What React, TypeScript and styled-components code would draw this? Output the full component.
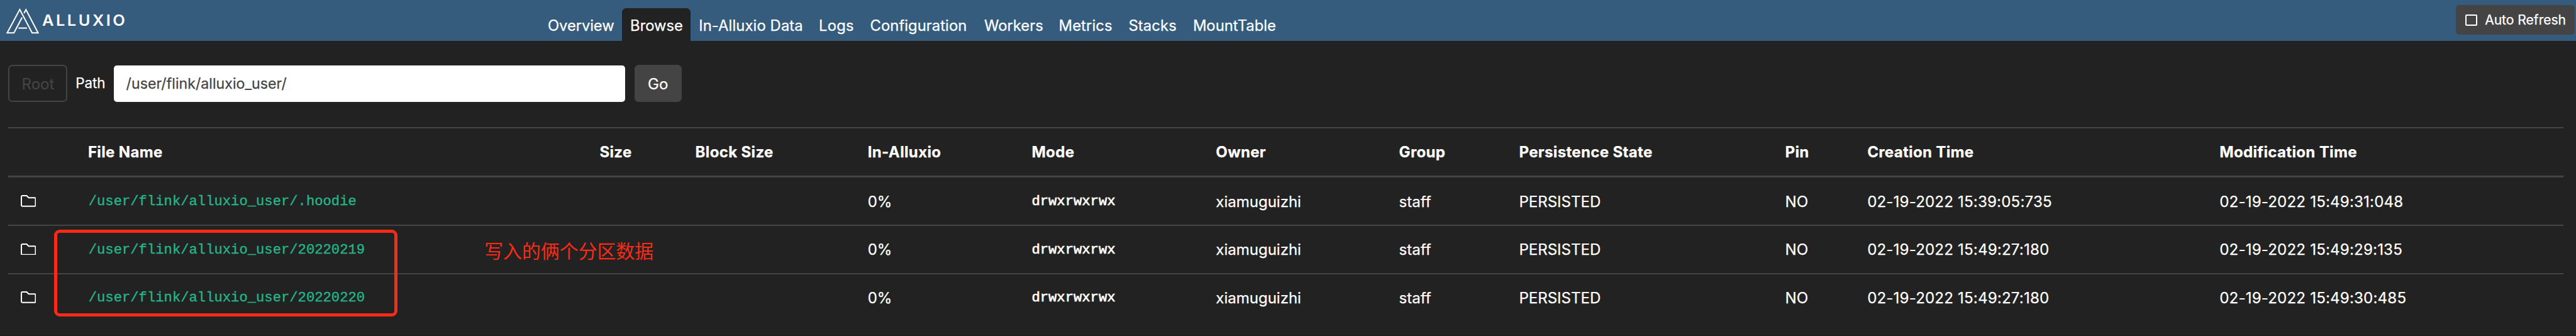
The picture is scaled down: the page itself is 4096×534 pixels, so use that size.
import React from "react";
import styled, { createGlobalStyle } from "styled-components";

/* Design units are device pixels of a 5020px wide canvas. */
const SCALE = 4096 / 5020;
const u = (n: number) => `${(n * SCALE).toFixed(3)}px`;

const color = {
  bar: "#365c7d",
  page: "#222222",
  line: "#444444",
  link: "#26b489",
  mark: "#fb2a17",
};

const GlobalStyle = createGlobalStyle`
  * { box-sizing: border-box; }
  body {
    margin: 0;
    background: ${color.page};
    color: #fff;
    font-family: Inter, "Noto Sans CJK SC", sans-serif;
    font-size: 24px;
    line-height: 1.25;
    -webkit-text-stroke-width: 0.25px;
    overflow: hidden;
  }
`;

const Page = styled.div`
  position: relative;
  width: 4096px;
  height: 534px;
  display: flex;
  flex-direction: column;
  background: ${color.page};
  border-bottom: 1px solid #1b1b1b;
`;

const Header = styled.header`
  display: flex;
  align-items: flex-start;
  flex: none;
  height: ${u(80)};
  background: ${color.bar};
`;

const Brand = styled.div`
  width: ${u(1051.5)};
  flex: none;
`;

const Logo = styled.svg`
  display: block;
  width: ${u(260)};
  height: ${u(80)};
`;

const Nav = styled.nav`
  display: flex;
  flex: 1;
  padding-top: ${u(16)};
`;

const Tab = styled.a<{ $width: number; $active?: boolean; $spacing?: number }>`
  display: flex;
  align-items: center;
  width: ${(p) => u(p.$width)};
  height: ${u(64)};
  padding: 3px 0 0 ${u(16)};
  font-size: 23.8px;
  letter-spacing: ${(p) => p.$spacing ?? 0}px;
  white-space: nowrap;
  border-radius: ${u(8)} ${u(8)} 0 0;
  background: ${(p) => (p.$active ? color.page : "transparent")};
`;

const RefreshButton = styled.button`
  display: flex;
  align-items: center;
  width: ${u(232)};
  height: ${u(58)};
  margin: ${u(10)} ${u(2)} 0 0;
  padding: 0 0 0 ${u(18)};
  border: 0;
  border-radius: ${u(6)};
  background: ${color.line};
  color: #fff;
  font: 21.05px Inter, sans-serif;
  white-space: nowrap;
`;

const CheckBox = styled.span`
  width: ${u(24)};
  height: ${u(22.5)};
  margin-right: ${u(14.5)};
  border: 2px solid #fff;
  border-radius: 2px;
`;

const Toolbar = styled.form`
  display: flex;
  align-items: center;
  flex: none;
  height: ${u(72)};
  margin: ${u(46)} 0 ${u(50)} ${u(16.5)};
`;

const Button = styled.button<{ $width: number; $outline?: boolean }>`
  width: ${(p) => u(p.$width)};
  height: ${u(72)};
  padding: 2px 0 0;
  border: 2px solid ${color.line};
  border-radius: ${u(8)};
  background: ${(p) => (p.$outline ? "transparent" : color.line)};
  color: ${(p) => (p.$outline ? color.line : "#fff")};
  font: 24px Inter, sans-serif;
`;

const Label = styled.label`
  width: ${u(75)};
  margin-left: ${u(15.6)};
  font-size: 22.4px;
`;

const PathInput = styled.input`
  width: ${u(995.6)};
  height: ${u(70)};
  margin: ${u(2)} ${u(18.3)} 0 0;
  padding: 0 0 0 ${u(23.6)};
  border: 0;
  border-radius: ${u(6)};
  background: #fff;
  color: #444;
  font: 23.2px Inter, sans-serif;
`;

const Table = styled.div`
  display: flex;
  flex-direction: column;
  width: ${u(4980)};
  margin-left: ${u(16)};
`;

const Rule = styled.div<{ $size: number }>`
  height: ${(p) => u(p.$size)};
  background: ${color.line};
`;

const COLUMNS = [155.5, 997, 186.5, 336, 319.5, 359, 357, 234, 518.5, 160, 686.5, 670];

const Row = styled.div<{ $head?: boolean }>`
  display: grid;
  grid-template-columns: ${COLUMNS.map(u).join(" ")};
  align-items: center;
  height: ${u(92)};
  padding-top: 2px;
  white-space: nowrap;
  font-weight: ${(p) => (p.$head ? 700 : 400)};
  letter-spacing: ${(p) => (p.$head ? 0.35 : 0)}px;
`;

const Cell = styled.span``;

const TimeCell = styled.span`
  letter-spacing: 0.22px;
`;

const MonoCell = styled.span<{ $link?: boolean }>`
  padding-left: ${(p) => (p.$link ? u(1) : 0)};
  font-family: "Liberation Mono", monospace;
  font-size: 22.2px;
  letter-spacing: 0;
  -webkit-text-stroke-width: ${(p) => (p.$link ? 0.4 : 0.7)}px;
  color: ${(p) => (p.$link ? color.link : "#fff")};
`;

const Folder = styled.svg`
  display: block;
  width: ${u(30)};
  height: ${u(23)};
  margin: 0 0 3px ${u(24)};
`;

const HighlightBox = styled.div`
  position: absolute;
  left: ${u(105)};
  top: ${u(447.7)};
  width: ${u(670)};
  height: ${u(168.5)};
  border: 5px solid ${color.mark};
  border-radius: ${u(11)};
`;

const Note = styled.div`
  position: absolute;
  left: ${u(944)};
  top: ${u(462)};
  font-family: "Noto Sans CJK SC", sans-serif;
  font-size: 29.9px;
  line-height: 40px;
  -webkit-text-stroke-width: 0;
  color: ${color.mark};
  white-space: nowrap;
`;

const tabs = [
  { label: "Overview", width: 160.7, spacing: -0.1 },
  { label: "Browse", width: 133.7, active: true },
  { label: "In-Alluxio Data", width: 234, spacing: 0.1 },
  { label: "Logs", width: 99.8, spacing: 0.2 },
  { label: "Configuration", width: 222.4, spacing: 0.05 },
  { label: "Workers", width: 145.3 },
  { label: "Metrics", width: 136, spacing: 0.1 },
  { label: "Stacks", width: 125.5, spacing: 0.1 },
  { label: "MountTable", width: 192 },
];

const headings = [
  "", "File Name", "Size", "Block Size", "In-Alluxio", "Mode", "Owner", "Group",
  "Persistence State", "Pin", "Creation Time", "Modification Time",
];

const files = [
  { path: "/user/flink/alluxio_user/.hoodie", created: "02-19-2022 15:39:05:735", modified: "02-19-2022 15:49:31:048" },
  { path: "/user/flink/alluxio_user/20220219", created: "02-19-2022 15:49:27:180", modified: "02-19-2022 15:49:29:135" },
  { path: "/user/flink/alluxio_user/20220220", created: "02-19-2022 15:49:27:180", modified: "02-19-2022 15:49:30:485" },
];

const BrandLogo = () => (
  <Logo viewBox="0 0 260 80" fill="none" stroke="#fff" strokeWidth="2.5">
    <path d="M43 34 L27.2 64 H14 L38.5 18.5 L62.6 64 H74.2 L50.6 18.8 L46.8 25.6" />
    <path d="M36 54.7 H52.5" />
    <text
      x="82"
      y="49.8"
      fill="#fff"
      stroke="none"
      fontFamily="Inter, sans-serif"
      fontWeight="600"
      fontSize="29"
      letterSpacing="4"
      textLength="166"
      lengthAdjust="spacingAndGlyphs"
    >
      ALLUXIO
    </text>
  </Logo>
);

const FolderIcon = () => (
  <Folder viewBox="0 0 30 23" fill="none" stroke="#fff" strokeWidth="2.4">
    <path d="M1.2 3.4 Q1.2 1.2 3.4 1.2 H11.6 L15.4 5.2 H27 Q28.8 5.2 28.8 7 V20 Q28.8 21.8 27 21.8 H3 Q1.2 21.8 1.2 20 Z" />
  </Folder>
);

export default function App() {
  return (
    <>
      <GlobalStyle />
      <Page>
        <Header>
          <Brand>
            <BrandLogo />
          </Brand>
          <Nav>
            {tabs.map((t) => (
              <Tab key={t.label} $width={t.width} $active={t.active} $spacing={t.spacing}>
                {t.label}
              </Tab>
            ))}
          </Nav>
          <RefreshButton>
            <CheckBox />
            Auto Refresh
          </RefreshButton>
        </Header>
        <Toolbar>
          <Button type="button" $width={115.2} $outline>
            Root
          </Button>
          <Label>Path</Label>
          <PathInput defaultValue="/user/flink/alluxio_user/" />
          <Button type="button" $width={92}>
            Go
          </Button>
        </Toolbar>
        <Table>
          <Rule $size={2} />
          <Row $head>
            {headings.map((h, i) => (
              <Cell key={i}>{h}</Cell>
            ))}
          </Row>
          <Rule $size={4} />
          {files.map((f, i) => (
            <React.Fragment key={f.path}>
              {i > 0 && <Rule $size={2} />}
              <Row>
                <FolderIcon />
                <MonoCell $link>{f.path}</MonoCell>
                <Cell />
                <Cell />
                <Cell>0%</Cell>
                <MonoCell>drwxrwxrwx</MonoCell>
                <Cell>xiamuguizhi</Cell>
                <Cell>staff</Cell>
                <Cell>PERSISTED</Cell>
                <Cell>NO</Cell>
                <TimeCell>{f.created}</TimeCell>
                <TimeCell>{f.modified}</TimeCell>
              </Row>
            </React.Fragment>
          ))}
        </Table>
        <HighlightBox />
        <Note>写入的俩个分区数据</Note>
      </Page>
    </>
  );
}
